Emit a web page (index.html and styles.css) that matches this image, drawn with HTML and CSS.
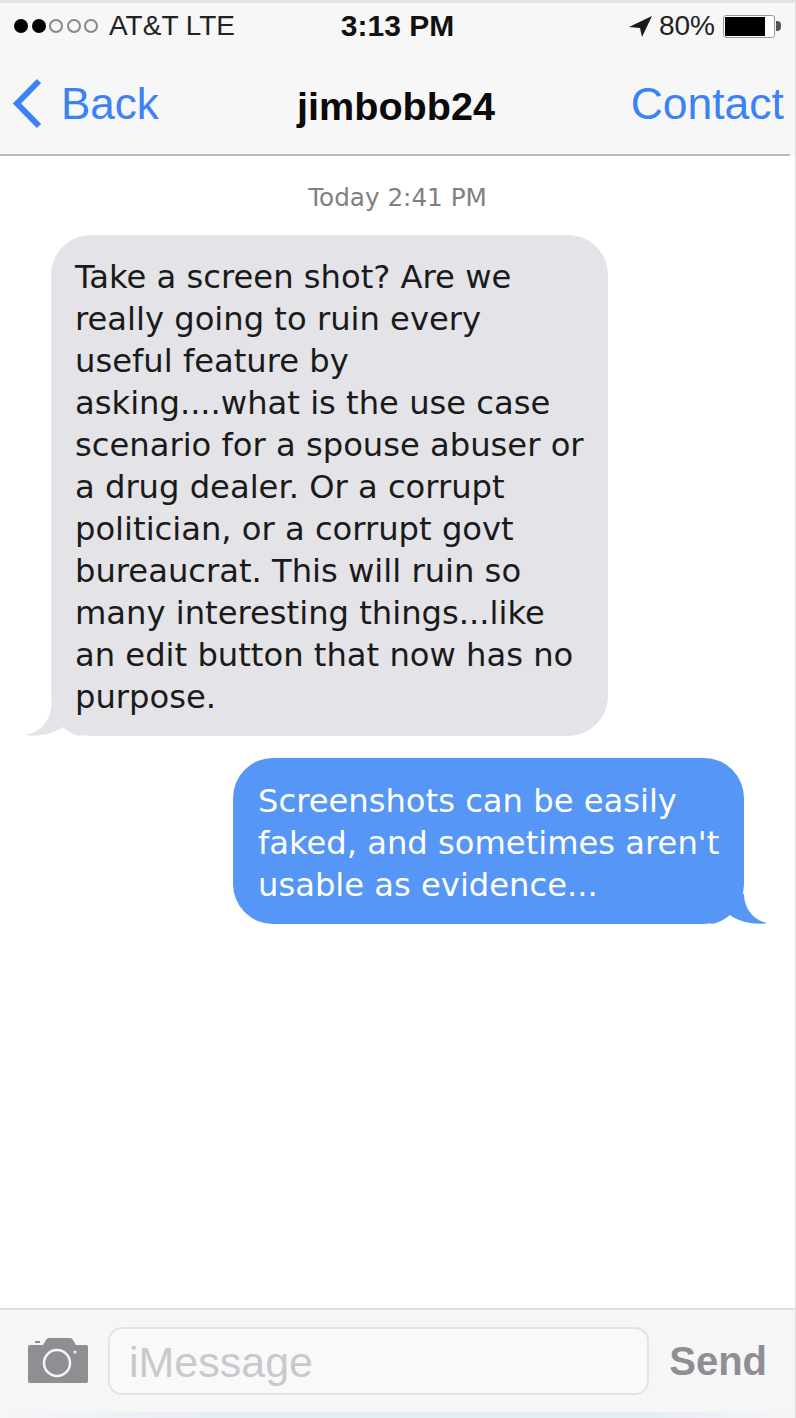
FILE: index.html
```html
<!DOCTYPE html>
<html lang="en">
<head>
    <meta charset="UTF-8">
    <meta name="viewport" content="width=device-width, initial-scale=1.0">
    <title>jimbobb24</title>
    <link rel="stylesheet" href="styles.css">
</head>
<body>
    <div class="phone">
        <header class="top-bar">
            <div class="status-bar">
                <div class="status-left">
                    <span class="signal">
                        <i class="dot on"></i><i class="dot on"></i><i class="dot"></i><i class="dot"></i><i class="dot"></i>
                    </span>
                    <span>AT&amp;T LTE</span>
                </div>
                <div class="status-time">3:13 PM</div>
                <div class="status-right">
                    <svg class="location" width="24" height="24" viewBox="0 0 24 24"><path d="M23 2 L0 13 L11 14 L13 23 Z" fill="#1a1a1a"/></svg>
                    <span>80%</span>
                    <span class="battery"><span class="battery-fill"></span></span>
                    <span class="battery-tip"></span>
                </div>
            </div>
            <nav class="nav-bar">
                <a class="nav-back" href="#">
                    <svg width="32" height="52" viewBox="0 0 32 52"><path d="M28 3 L6 25.500 L28 48" fill="none" stroke="#3b82f6" stroke-width="6"/></svg>
                    <span>Back</span>
                </a>
                <div class="nav-title">jimbobb24</div>
                <a class="nav-contact" href="#">Contact</a>
            </nav>
            <div class="nav-line"></div>
        </header>

        <main class="messages">
            <div class="timestamp">Today 2:41 PM</div>
            <div class="bubble received">
                Take a screen shot? Are we<br>
                really going to ruin every<br>
                useful feature by<br>
                asking....what is the use case<br>
                scenario for a spouse abuser or<br>
                a drug dealer. Or a corrupt<br>
                politician, or a corrupt govt<br>
                bureaucrat. This will ruin so<br>
                many interesting things...like<br>
                an edit button that now has no<br>
                purpose.
                <svg class="tail tail-left" width="56" height="30" viewBox="0 0 56 30"><path d="M26 0 C26 14 16 26 0 29 C10 31 26 29 38 21 C42 25 48 29 56 30 L56 0 Z" fill="#e3e3e8"/></svg>
            </div>
            <div class="bubble sent">
                Screenshots can be easily<br>
                faked, and sometimes aren't<br>
                usable as evidence...
                <svg class="tail tail-right" width="56" height="30" viewBox="0 0 56 30"><path d="M33 0 C33 14 42 26 56 29 C46 31 30 29 19 21 C14 25 8 29 0 30 L0 0 Z" fill="#5596f6"/></svg>
            </div>
        </main>

        <footer class="input-bar">
            <svg class="camera" width="62" height="46" viewBox="0 0 62 46">
                <path d="M3 7 H16 L19 2 Q20 0 22 0 H43 Q45 0 46 2 L49 7 H59 Q61 7 61 9 V43 Q61 45 59 45 H3 Q1 45 1 43 V9 Q1 7 3 7 Z" fill="#8e8e93"/>
                <rect x="8" y="3" width="5" height="2" fill="#8e8e93"/>
                <circle cx="30" cy="25" r="13" fill="none" stroke="#f6f6f7" stroke-width="2.500"/>
                <circle cx="48" cy="14" r="1.500" fill="#f6f6f7"/>
            </svg>
            <div class="input-box">iMessage</div>
            <div class="send">Send</div>
        </footer>
        <div class="bottom-strip"></div>
    </div>
</body>
</html>
```

FILE: styles.css
```css
/* General Styles */
html, body {
    margin: 0;
    padding: 0;
}
body {
    width: 796px;
    height: 1418px;
    overflow: hidden;
    background-color: #fff;
    font-family: "Liberation Sans", Arial, sans-serif;
}
.phone {
    display: flex;
    flex-direction: column;
    height: 1418px;
    box-sizing: border-box;
    border-right: 1px solid #dcdcde;
    background-color: #f7f7f8;
}
/* Header */
.top-bar {
    border-top: 3px solid #e4e4e6;
    background-color: #f7f7f8;
}
.status-bar {
    display: grid;
    grid-template-columns: 1fr auto 1fr;
    align-items: center;
    height: 46px;
    padding: 0 14px;
    font-size: 28px;
    color: #222;
}
.status-left {
    display: flex;
    align-items: center;
    gap: 11px;
}
.signal {
    display: flex;
    gap: 3.500px;
}
.dot {
    width: 14px;
    height: 14px;
    border: 2px solid #888;
    border-radius: 50%;
    box-sizing: border-box;
}
.dot.on {
    background-color: #000;
    border-color: #000;
}
.status-time {
    font-size: 30px;
    font-weight: bold;
    color: #111;
}
.status-right {
    display: flex;
    align-items: center;
    justify-content: flex-end;
    gap: 6px;
}
.battery {
    display: block;
    width: 52px;
    height: 23px;
    border: 1px solid #999;
    border-radius: 3px;
    box-sizing: border-box;
    margin-left: 2px;
    padding: 1px;
    background-color: #fff;
}
.battery-fill {
    display: block;
    width: 40px;
    height: 100%;
    background-color: #000;
}
.battery-tip {
    width: 5px;
    height: 10px;
    margin-left: -5px;
    background-color: #555;
    border-radius: 0 4px 4px 0;
}
/* Nav */
.nav-bar {
    display: grid;
    grid-template-columns: 1fr auto 1fr;
    align-items: center;
    height: 105px;
    box-sizing: border-box;
    padding: 5px 11px 0;
    font-size: 44px;
}
.nav-bar a {
    color: #3b82f6;
    text-decoration: none;
}
.nav-back {
    display: flex;
    align-items: center;
    gap: 18px;
}
.nav-title {
    padding: 4px 3px 0 0;
    font-weight: bold;
    font-size: 39.600px;
    color: #0a0a0a;
}
.nav-contact {
    text-align: right;
    font-size: 44.500px;
}
.nav-line {
    height: 2px;
    margin-right: 5px;
    background-color: #b9b9bc;
}
/* Messages */
.messages {
    flex: 1;
    display: flex;
    flex-direction: column;
    background-color: #fff;
    font-family: "DejaVu Sans", Verdana, sans-serif;
    font-size: 32.200px;
    line-height: 42px;
}
.timestamp {
    margin-top: 27px;
    text-align: center;
    font-size: 24.700px;
    line-height: 30px;
    color: #808084;
}
.bubble {
    position: relative;
    z-index: 0;
    box-sizing: border-box;
    border-radius: 40px;
}
.received {
    align-self: flex-start;
    width: 557px;
    margin: 22px 0 0 51px;
    padding: 21px 0 18px 24px;
    background-color: #e3e3e8;
    color: #1a1a1a;
}
.sent {
    align-self: flex-start;
    width: 511px;
    margin: 22px 0 0 233px;
    padding: 22px 0 18px 25px;
    background-color: #5596f6;
    color: #fff;
}
.tail {
    position: absolute;
    z-index: -1;
    bottom: 0;
}
.tail-left {
    left: -26px;
}
.tail-right {
    right: -23px;
}
/* Input bar */
.input-bar {
    display: flex;
    align-items: center;
    height: 104px;
    box-sizing: border-box;
    padding: 0 28px 0 27px;
    border-top: 2px solid #dedee0;
    background-color: #f6f6f7;
}
.input-box {
    flex: 1;
    height: 68px;
    box-sizing: border-box;
    margin: 0 20px 0 19px;
    padding-left: 19px;
    border: 2px solid #e3e3e5;
    border-radius: 14px;
    background-color: #f9f9fa;
    font-size: 43px;
    line-height: 66px;
    color: #c9c9cd;
}
.send {
    font-size: 40px;
    font-weight: bold;
    color: #8e8e93;
}
.bottom-strip {
    height: 6px;
    background: linear-gradient(to right, #f6f6f7, #e3edf8 30%, #e3edf8 80%, #f6f6f7);
}
```
